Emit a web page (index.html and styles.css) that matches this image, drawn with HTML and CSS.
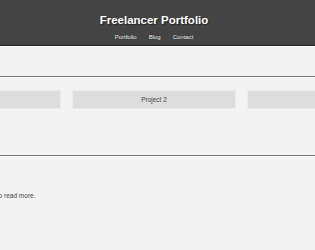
FILE: index.html
```html
<!DOCTYPE html>
<html lang="en">
<head>
    <meta charset="UTF-8">
    <meta name="viewport" content="width=device-width, initial-scale=1.0">
    <title>Freelancer Portfolio</title>
    <link rel="stylesheet" href="styles.css">
</head>
<body>
    <header class="site-header">
        <h1>Freelancer Portfolio</h1>
        <nav class="nav">
            <a href="#portfolio">Portfolio</a>
            <a href="#blog">Blog</a>
            <a href="#contact">Contact</a>
        </nav>
    </header>

    <section class="section" id="portfolio">
        <hr>
        <div class="projects">
            <div class="project">Project 1</div>
            <div class="project">Project 2</div>
            <div class="project">Project 3</div>
        </div>
    </section>

    <section class="section" id="blog">
        <hr>
        <div class="blog">
            <p>Read my latest article. Click here to read more.</p>
        </div>
    </section>
</body>
</html>
```

FILE: styles.css
```css
body {
    font-family: 'Liberation Sans', Arial, sans-serif;
    background-color: #f3f3f3;
    margin: 0;
    padding: 0;
    overflow: hidden;
    color: #333;
}

.site-header {
    background-color: #444;
    color: #fff;
    text-align: center;
    height: 45px;
    padding-right: 7px;
    border-bottom: 1px solid #222;
    box-shadow: 0 1px 0 #fff;
}

.site-header h1 {
    margin: 0;
    padding-top: 13px;
    font-size: 11.5px;
    line-height: 14px;
    font-weight: 700;
    text-shadow: 1px 1px 1px #222;
}

.nav {
    display: flex;
    justify-content: center;
    gap: 12px;
    margin-top: 6px;
}

.nav a {
    color: #fff;
    font-size: 6px;
    line-height: 8px;
    text-decoration: none;
    text-shadow: 0 0 1px #000;
}

hr {
    margin: 0;
    border: 0;
    border-top: 1px solid #777;
    border-bottom: 1px solid #fff;
}

#portfolio {
    padding-top: 30px;
}

.projects {
    display: flex;
    justify-content: center;
    gap: 11px;
    margin-top: 12px;
    padding-right: 7px;
}

.project {
    flex: 0 0 162px;
    height: 17px;
    line-height: 17px;
    background-color: #ddd;
    border: 1px solid #ebebeb;
    text-align: center;
    font-size: 6.5px;
    color: #444;
}

#blog {
    padding-top: 46px;
}

.blog {
    display: flex;
    justify-content: center;
    padding-right: 7px;
}

.blog p {
    flex: 0 0 508px;
    margin: 34px 0 0;
    font-size: 6.5px;
    line-height: 10px;
    color: #444;
}
```
